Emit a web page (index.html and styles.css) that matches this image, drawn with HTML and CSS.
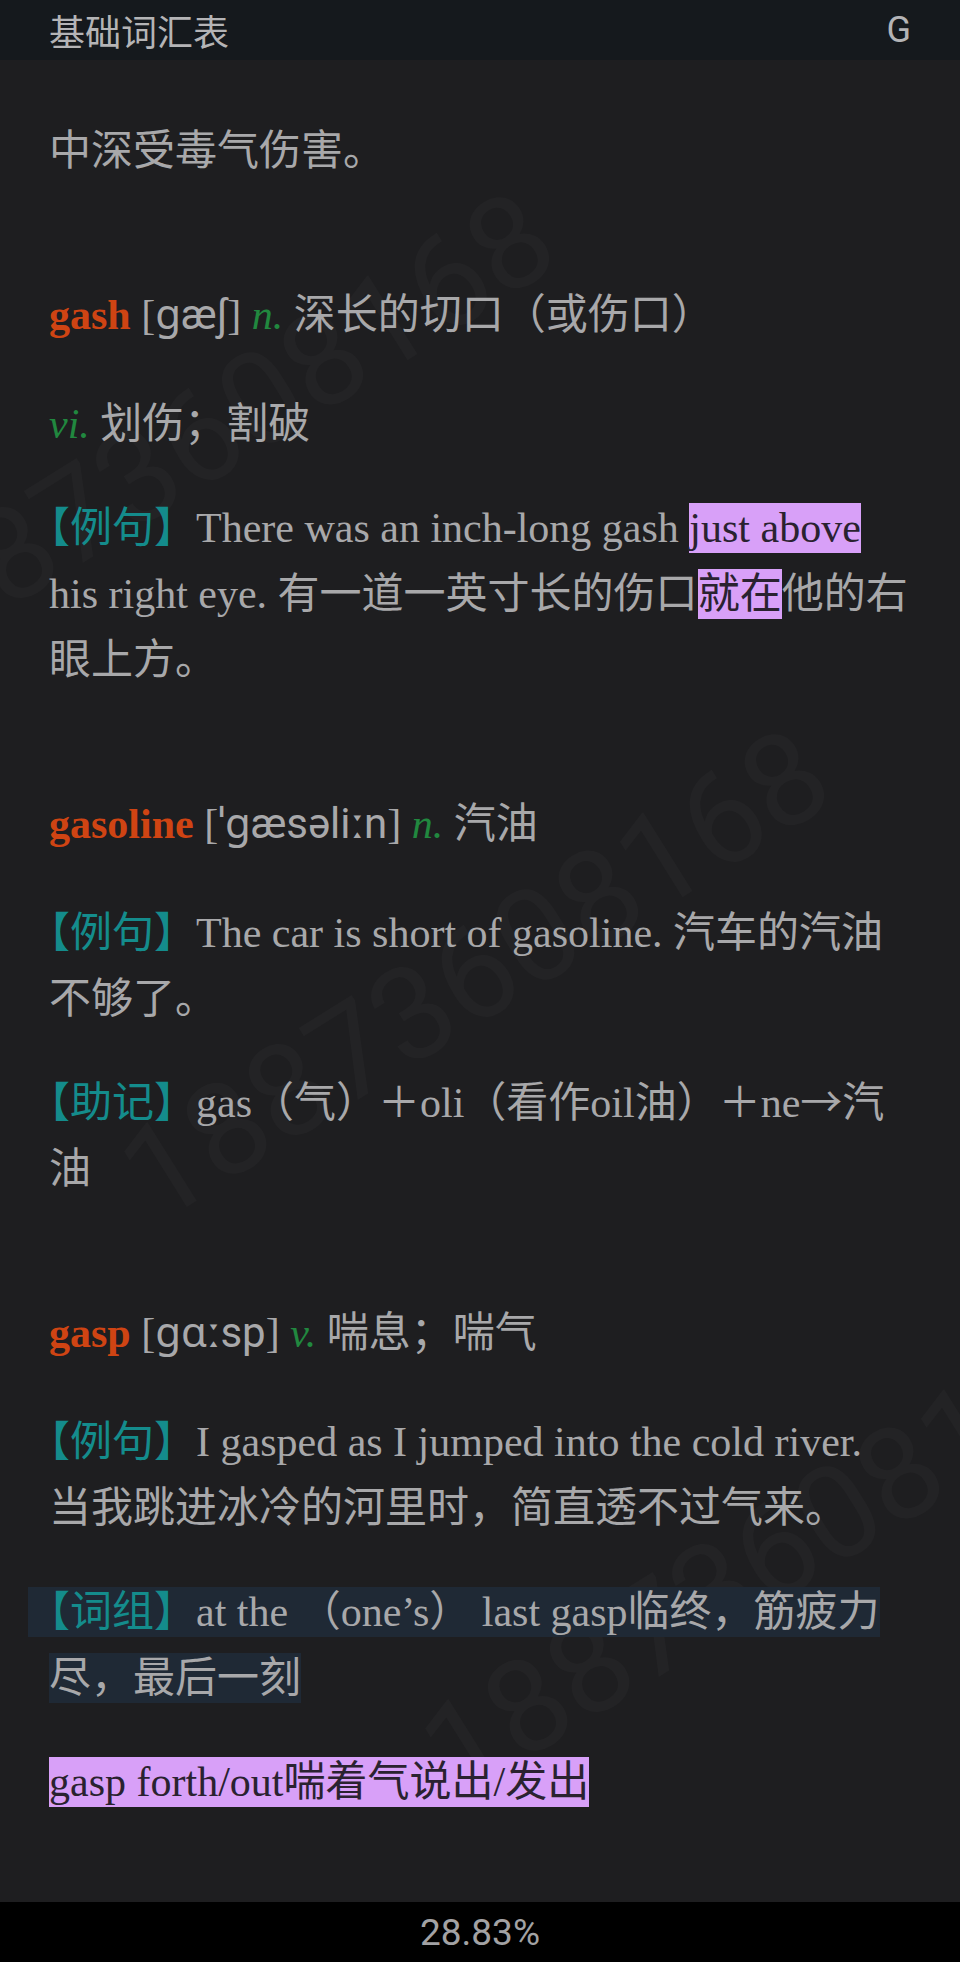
FILE: index.html
```html
<!DOCTYPE html>
<html lang="zh-CN">
<head>
<meta charset="utf-8">
<title>基础词汇表</title>
<link rel="stylesheet" href="styles.css">
</head>
<body>
<div class="app">
  <header class="topbar">
    <span class="title">基础词汇表</span>
    <span class="badge">G</span>
  </header>
  <main class="reader">
    <div class="watermarks" aria-hidden="true">
      <span class="wm wm1">18873608168</span>
      <span class="wm wm2">18873608168</span>
      <span class="wm wm3">18873608168</span>
    </div>
    <article class="content">
      <section class="entry">
        <p>中深受毒气伤害。</p>
      </section>
      <section class="entry">
        <p class="head"><b class="hw">gash</b> [<span class="ipa">ɡæʃ</span>] <i class="pos">n.</i> 深长的切口（或伤口）</p>
        <p><i class="pos">vi.</i> 划伤；割破</p>
        <p><span class="tag">【例句】</span>There was an inch-long gash <mark class="hl">just above</mark> his right eye. 有一道一英寸长的伤口<mark class="hl">就在</mark>他的右眼上方。</p>
      </section>
      <section class="entry">
        <p class="head"><b class="hw">gasoline</b> [<span class="ipa">ˈɡæsəliːn</span>] <i class="pos">n.</i> 汽油</p>
        <p><span class="tag">【例句】</span>The car is short of gasoline. 汽车的汽油不够了。</p>
        <p><span class="tag">【助记】</span>gas（气）＋oli（看作oil油）＋ne<span class="arrow">→</span>汽油</p>
      </section>
      <section class="entry">
        <p class="head"><b class="hw">gasp</b> [<span class="ipa">ɡɑːsp</span>] <i class="pos">v.</i> 喘息；喘气</p>
        <p><span class="tag">【例句】</span>I gasped as I jumped into the cold river. 当我跳进冰冷的河里时，简直透不过气来。</p>
        <p><span class="phrase"><span class="tag">【词组】</span>at the （one’s） last gasp临终，筋疲力尽，最后一刻</span></p>
        <p><mark class="hl">gasp forth/out喘着气说出/发出</mark></p>
      </section>
    </article>
  </main>
  <footer class="status">28.83%</footer>
</div>
</body>
</html>
```

FILE: styles.css
```css
* {
  box-sizing: border-box;
}

html,
body {
  margin: 0;
  padding: 0;
  background: #1e1e20;
}

body {
  font-family: "Liberation Serif", "Noto Sans CJK SC", serif;
}

.app {
  width: 960px;
  height: 1962px;
  display: flex;
  flex-direction: column;
  overflow: hidden;
}

.topbar {
  flex: none;
  height: 60px;
  background: #15191d;
  display: flex;
  align-items: center;
  justify-content: space-between;
  padding: 0 49px;
  color: #b4b4b6;
  font-family: "Noto Sans CJK SC", sans-serif;
  font-size: 36px;
  line-height: 1;
}

.badge {
  font-family: Roboto, "Noto Sans", sans-serif;
  font-size: 36px;
}

.reader {
  flex: 1;
  position: relative;
  z-index: 0;
  overflow: hidden;
  background: #1e1e20;
  padding: 58px 48px 0 49px;
}

.watermarks {
  position: absolute;
  inset: 0;
  z-index: -1;
  pointer-events: none;
}

.wm {
  position: absolute;
  font-family: Roboto, "Noto Sans", sans-serif;
  font-size: 130px;
  line-height: 1;
  color: rgba(255, 255, 255, 0.022);
  white-space: nowrap;
  transform: translate(-50%, -50%) rotate(-32deg);
}

.wm1 {
  left: 200px;
  top: 378px;
}

.wm2 {
  left: 475px;
  top: 915px;
}

.wm3 {
  left: 776px;
  top: 1492px;
}

.content {
  display: flex;
  flex-direction: column;
  gap: 98px;
}

.entry {
  display: flex;
  flex-direction: column;
  gap: 38px;
}

.entry p {
  margin: 0;
  font-size: 42px;
  line-height: 66px;
  color: #a8a8aa;
}

.entry .head {
  margin-bottom: 5px;
}

.hw {
  font-weight: bold;
  color: #cf4413;
}

.pos {
  font-style: italic;
  color: #21883f;
}

.ipa {
  font-family: Roboto, "Noto Sans", "DejaVu Sans", sans-serif;
  line-height: 1;
}

.arrow {
  font-family: "Noto Sans CJK SC", sans-serif;
  line-height: 1;
}

.tag {
  color: #148c8c;
  margin-left: -0.5em;
}

.hl {
  background: #d8a0f8;
  color: #2a2230;
  padding: 2px 0;
}

.phrase {
  background: #1f2935;
  margin-left: -0.5em;
  padding: 2px 0;
}

.phrase .tag {
  margin-left: 0;
}

.status {
  flex: none;
  height: 60px;
  background: #000;
  color: #a2a2a4;
  font-family: Roboto, "Noto Sans", sans-serif;
  font-size: 37px;
  display: flex;
  align-items: center;
  justify-content: center;
}
```
